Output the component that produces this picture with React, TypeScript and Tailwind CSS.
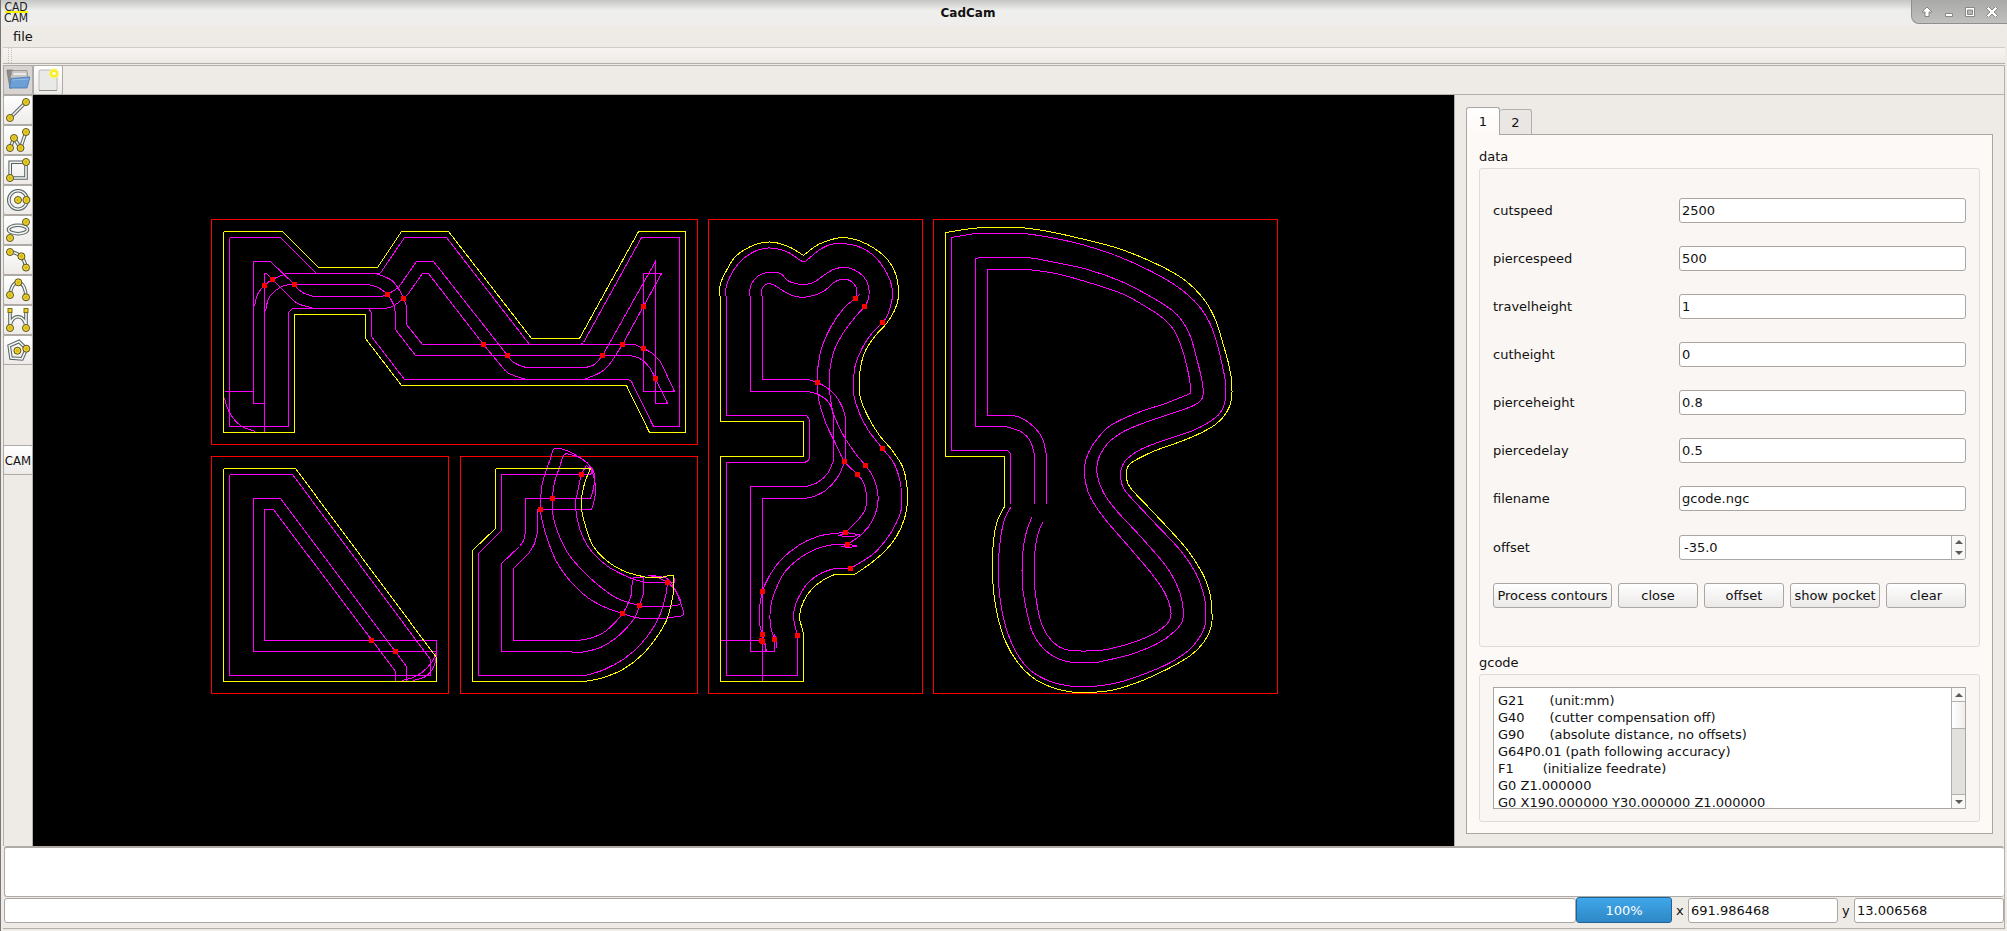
import type { ReactNode } from "react";

const tools = [
	{ name: "line", icon: <LineIcon /> },
	{ name: "polyline", icon: <PolylineIcon /> },
	{ name: "rectangle", icon: <RectangleIcon /> },
	{ name: "circle", icon: <CircleIcon /> },
	{ name: "ellipse", icon: <EllipseIcon /> },
	{ name: "arc", icon: <ArcIcon /> },
	{ name: "quadratic curve", icon: <QuadraticIcon /> },
	{ name: "cubic curve", icon: <CubicIcon /> },
	{ name: "polygon", icon: <PolygonIcon /> },
];

const fields = [
	{ name: "cutspeed", value: "2500" },
	{ name: "piercespeed", value: "500" },
	{ name: "travelheight", value: "1" },
	{ name: "cutheight", value: "0" },
	{ name: "pierceheight", value: "0.8" },
	{ name: "piercedelay", value: "0.5" },
	{ name: "filename", value: "gcode.ngc" },
];

const gcode = [
	"G21      (unit:mm)",
	"G40      (cutter compensation off)",
	"G90      (absolute distance, no offsets)",
	"G64P0.01 (path following accuracy)",
	"F1       (initialize feedrate)",
	"G0 Z1.000000",
	"G0 X190.000000 Y30.000000 Z1.000000",
].join("\n");

// x, y, width, height
const sheets = [
	[211, 219, 486, 225],
	[211, 456, 237, 237],
	[460, 456, 237, 237],
	[708, 219, 214, 474],
	[933, 219, 344, 474],
];

// Points in parentheses are joined by a smooth curve, all others by straight lines.
const contours = [
	"223,231 282,231 318,267 377,267 401,231 448,231 531,338 579,338 638,231 685,231 685,432 649,432 626,385 401,385 365,338 365,314 294,314 294,432 223,432 223,231",
	"223,468 295,468 436,657 436,681 223,681 223,468",
	"495,468 590,468 (589,470 584,483 581,498 581,509 586,529 593,546 606,560 622,570 642,576 652,577 660,577 668,575) 673,575 (673,592 670,607 666,620 658,634 643,653 624,668 603,677 584,681) 472,681 472,550 495,528 495,468",
	"720,421 (720,297 719,293 720,283 726,270 735,256 750,246 763,242 775,242 790,247 803,255) (803,255 816,245 831,239 843,237 858,240 874,248 887,259 895,273 898,288 898,297 894,310 886,323 875,335 865,350 860,367 859,384 860,398 868,417 879,435 891,449 902,466 906,482 907,500 904,518 896,536 885,550 870,563 854,574) (834,574 822,580 811,589 803,601 799,615 800,622 803,633) 803,681 720,681 720,456 803,456 803,421 720,421",
	"945,456 (945,232 971,228 987,227 1019,227 1048,231 1080,238 1118,248 1155,263 1182,278 1202,297 1214,317 1221,338 1228,363 1231,380 1231,399 1226,412 1215,424 1195,435 1172,444 1155,450 1140,457 1130,463 1126,470 1127,482 1133,491 1153,512 1185,547 1201,571 1209,591 1211,605 1211,625 1203,642 1190,655 1168,668 1142,680 1115,689 1090,692 1075,692 1055,688 1035,679 1018,663 1005,641 997,615 993,590 992,570 993,540 997,520 1004,506) 1004,456 945,456",
];

const toolpaths = [
	"229,237 280,237 316,273 379,273 381,271 404,237 446,237 529,344 580,344 583,342 641,237 679,237 679,426 653,426 631,381 628,379 404,379 371,336 371,312 368,308 292,308 288,312 288,426 229,426 229,237",
	"264,403 253,403 253,261 270,261 (294,284 298,289 304,293 313,296) (381,296 387,294 398,287) 416,261 433,261 (507,355 512,361 519,365 526,367) (585,367 594,364 602,355) 655,261 655,403 667,403 (655,378 649,367 641,359 634,356 626,355) 415,355 395,329 (395,313 393,304 387,294 381,289 375,286 367,284) (294,284 284,285 275,290 268,298 265,311)",
	"264,432 264,273 266,273 (289,296 297,303 310,307) 313,308 (383,308 392,306 403,298) 408,293 422,273 428,273 (483,344 498,362 507,372 522,378) 526,379",
	"583,379 (586,378 600,372 608,365 615,355 622,344) 661,273 643,273 643,391 674,391 (660,361 652,353 643,348 634,344) 422,344 406,324 (406,306 403,298 398,288 390,279 375,273) (286,273 272,279 264,285 257,294 254,306)",
	"224,391 253,391",
	"(224,398 229,412 240,425 255,431)",

	"229,474 292,474 430,659 430,675 229,675 229,474",
	"406,681 406,666 280,498 253,498 253,651 436,651 (436,655 433,667 425,676 413,680)",
	"395,681 395,671 273,509 264,509 264,640 436,640 (436,646 435,655 427,667 415,676 402,680)",

	"590,474 501,474 501,530 478,553 478,675 (585,675 604,669 624,658 640,644 653,627 660,613 665,596 667,582) 667,577",
	"590,474 592,470 (586,465 581,474 577,492 575,503 577,520 583,538 592,552 606,565 622,574 634,579 645,582) 674,582 674,578 672,575",
	"(590,498 593,488 594,475 591,467 581,458 573,455 564,454 559,467 554,482 552,498 552,512 557,531 567,552 580,568 597,584 615,597 628,602 639,605 645,606) (667,606 680,603 675,590 667,582 657,577 648,575)",
	"590,498 525,498 (525,531 523,540 519,546) 501,563 501,651 (567,651 577,652 585,651 600,647 616,637 630,623 636,614 639,605 643,593) 643,577",
	"(591,509 594,499 595,488 593,475 588,464 576,455 566,450 554,448 550,458 544,475 541,488 540,509 542,522 548,542 557,563 571,582 587,597 605,607 622,613 635,617 645,618) (664,618 676,616 683,614 680,602 675,590 668,579 659,576 649,575)",
	"591,509 537,509 (537,531 534,543 528,553) 513,568 513,640 (578,640 592,637 606,630 622,613 630,597 631,588 633,577) 643,577",

	"726,415 (726,298 725,290 729,277 738,263 750,253 763,248 775,248 788,252 800,260 803,261 806,260 818,250 830,244 843,243 858,246 872,254 883,267 890,281 892,292 891,302 887,315 882,322 872,332 862,347 855,364 853,380 853,393 859,413 868,430 882,448 893,462 899,478 901,492 901,508 895,524 885,540 872,554 850,568) (834,568 820,573 807,583 798,597 794,608 793,618 797,635) 797,675 726,675 726,462 804,462 808,460 809,457 809,419 806,415 726,415",
	"750,391 (750,298 749,290 753,280 760,274 769,272 780,273 787,280 795,283 803,284 813,282 823,275 833,269 843,267 853,269 863,276 868,286 868,298 864,306 856,315 843,332 833,352 829,373 829,390 833,413 843,435 855,453 865,465 872,475 877,490 877,505 872,520 862,533 847,544) (833,544 817,548 800,557 784,572 774,592 770,607 770,625 774,639) 774,651 750,651 750,486 (806,486 817,482 827,473 833,460) (833,415 829,403 820,395 808,391) 750,391",
	"762,379 (762,298 761,290 764,285 769,283 776,286 782,290 795,296 809,296 823,291 832,283 840,279 847,279 853,283 856,288 856,297) 859,294 (855,298 843,308 830,327 821,348 817,370 817,382 818,398 825,422 835,443 844,461 857,474 863,482 866,495 865,508 858,519 845,532) (833,533 817,536 798,545 780,560 768,577 762,591 759,607 759,623 762,634 766,651)",
	"762,379 (808,379 817,382 826,387 835,395 842,407 845,418) (845,452 844,461 837,477 825,490 813,496 803,498) 762,498 762,681",
	"720,640 762,640",
	"765,642 765,651",
	"774,634 776,642 776,647",
	"845,532 858,534 853,536 844,536 839,535 845,532",
	"847,544 856,545 856,546 847,547 842,546 847,544",

	"1010,503 1010,453 1007,450 951,450 (951,237 975,233 987,233 1021,233 1050,237 1085,245 1118,256 1151,271 1178,287 1198,305 1210,324 1217,345 1222,366 1225,382 1225,398 1220,412 1208,422 1190,431 1160,441 1140,449 1127,458 1122,465 1120,472 1121,482 1126,492 1150,518 1180,550 1195,572 1203,593 1205,605 1205,623 1199,637 1188,650 1168,663 1145,673 1118,682 1092,686 1073,686 1050,681 1030,670 1017,654 1007,632 1001,608 998,582 998,560 1000,538 1004,519 1010,507)",
	"1034,503 (1034,455 1030,441 1022,432 1012,428 1005,426) 975,426 975,258 (980,257 1025,257 1055,262 1087,269 1121,281 1150,296 1172,310 1182,321 1190,336 1197,361 1202,383 1202,397 1195,404 1180,410 1150,420 1125,430 1110,440 1102,450 1097,462 1097,476 1103,492 1115,509 1140,536 1165,565 1177,586 1182,603 1182,620 1174,631 1157,643 1130,654 1105,660 1094,662 1072,662 1055,657 1042,647 1032,632 1026,610 1022,585 1022,555 1025,535 1031,517)",
	"1046,503 (1046,455 1042,438 1034,427 1022,418 1012,415) 987,415 987,269 (1027,269 1055,273 1085,281 1121,293 1145,306 1163,318 1173,329 1180,344 1186,364 1190,385 1190,393) (1165,403 1135,413 1110,425 1097,438 1088,452 1084,466 1085,482 1090,497 1104,518 1129,547 1151,573 1163,590 1170,608 1169,620 1157,631 1138,640 1115,647 1098,650 1070,650 1058,646 1047,635 1040,620 1036,601 1034,583 1034,555 1037,535 1042,522)",
];

const nodes = [
	[264, 285], [272, 279], [294, 284], [387, 294], [403, 298], [483, 344],
	[507, 355], [602, 355], [622, 344], [643, 306], [643, 348], [655, 378],
	[371, 640], [395, 651],
	[581, 474], [552, 498], [540, 509], [667, 582], [639, 605], [622, 613],
	[855, 298], [864, 306], [882, 322], [817, 382], [882, 448], [844, 461],
	[865, 465], [857, 474], [845, 532], [847, 544], [850, 568], [762, 591],
	[762, 634], [761, 640], [762, 641], [774, 639], [797, 635],
];

function toPath(spec: string) {
	let d = "";
	for (const part of spec.match(/\([^)]*\)|[^\s()]+/g) ?? []) {
		const pts = part
			.replace(/[()]/g, "")
			.split(" ")
			.map((p) => p.split(",").map(Number));
		d += `${d ? "L" : "M"}${pts[0][0]} ${pts[0][1]}`;
		for (let i = 0; i < pts.length - 1; i++) {
			const b = pts[i];
			const c = pts[i + 1];
			// long spans are straight runs between two bends
			if (Math.hypot(c[0] - b[0], c[1] - b[1]) > 50) {
				d += `L${c[0]} ${c[1]}`;
				continue;
			}
			const a = pts[i - 1] ?? b;
			const e = pts[i + 2] ?? c;
			const ka = Math.hypot(b[0] - a[0], b[1] - a[1]) > 50 ? 16 : 6;
			const ke = Math.hypot(e[0] - c[0], e[1] - c[1]) > 50 ? 16 : 6;
			d += `C${b[0] + (c[0] - a[0]) / ka} ${b[1] + (c[1] - a[1]) / ka} ${c[0] - (e[0] - b[0]) / ke} ${c[1] - (e[1] - b[1]) / ke} ${c[0]} ${c[1]}`;
		}
	}
	return d;
}

function Drawing() {
	return (
		<svg
			viewBox="33 95 1421 751"
			className="min-w-0 flex-1 bg-black"
			fill="none"
			shapeRendering="crispEdges"
			role="img"
			aria-label="drawing"
		>
			<g transform="translate(0.5 0.5)">
				{sheets.map(([x, y, w, h]) => (
					<rect key={`${x}-${y}`} x={x} y={y} width={w} height={h} stroke="#f00" />
				))}
				{toolpaths.map((p) => (
					<path key={p} d={toPath(p)} stroke="#f0f" />
				))}
				{contours.map((p) => (
					<path key={p} d={toPath(p)} stroke="#ff0" />
				))}
				{nodes.map(([x, y]) => (
					<rect key={`${x}-${y}`} x={x - 2.5} y={y - 2.5} width={5} height={5} fill="#f00" />
				))}
			</g>
		</svg>
	);
}

function ToolIcon({ outline, dots, squares = [] }: { outline: string; dots: number[][]; squares?: number[][] }) {
	return (
		<svg viewBox="0 0 28 28" className="size-7" fill="none" aria-hidden="true">
			<path d={outline} stroke="#566360" strokeWidth={3.6} />
			<path d={outline} stroke="#f2f4f3" strokeWidth={1.6} />
			{squares.map(([x, y]) => (
				<rect key={x} x={x - 2} y={y - 2} width={4} height={4} fill="#edd21c" stroke="#7d6c16" />
			))}
			{dots.map(([x, y]) => (
				<g key={`${x}-${y}`}>
					<circle cx={x} cy={y} r={3.5} fill="#e5c91d" stroke="#5b5226" />
					<circle cx={x} cy={y} r={2.2} fill="#d6b916" stroke="#f3de3f" strokeWidth={0.8} />
				</g>
			))}
		</svg>
	);
}

function LineIcon() {
	return <ToolIcon outline="M6 22L22 6" dots={[[22, 6], [6, 22]]} />;
}

function PolylineIcon() {
	return <ToolIcon outline="M6 22L10 12L16.5 22L22 6" dots={[[22, 6], [10, 12], [6, 22], [16.5, 22]]} />;
}

function RectangleIcon() {
	return <ToolIcon outline="M6.2 6.2H22V22H6.2Z" dots={[[22, 6], [6, 22]]} />;
}

function CircleIcon() {
	return <ToolIcon outline="M4.8 14a9.2 9.2 0 1 0 18.4 0a9.2 9.2 0 1 0-18.4 0" dots={[[14, 14], [22.4, 14]]} />;
}

function EllipseIcon() {
	return <ToolIcon outline="M4.5 13.5a9.5 4.2 0 1 0 19 0a9.5 4.2 0 1 0-19 0" dots={[[22, 6], [6, 22]]} />;
}

function ArcIcon() {
	return <ToolIcon outline="M6 6Q20 7 22 21.6" dots={[[6, 6], [17.4, 10.3], [22, 21.6]]} />;
}

function QuadraticIcon() {
	return <ToolIcon outline="M6 19C7 11 10 6.5 14.3 6.3C19 7 22 13 22 21.3" dots={[[14.3, 6.3], [6, 19], [22, 21.3]]} />;
}

function CubicIcon() {
	return (
		<ToolIcon
			outline="M6 5V22C6 7 22 7 22 22V5"
			dots={[[6, 22], [22, 22]]}
			squares={[[6, 4.5], [22, 4.5]]}
		/>
	);
}

function PolygonIcon() {
	return <ToolIcon outline="M15 5.5L22.5 13L18 22.8L7 22L5.2 9.8Z" dots={[[13.4, 14.7], [22.3, 12.7]]} />;
}

function FolderIcon() {
	return (
		<svg viewBox="0 0 28 28" className="size-7" aria-hidden="true">
			<path d="M3 4h6l1 2v15l-4 1.500L3 6z" fill="#8c8c8a" stroke="#77736f" strokeWidth={0.6} />
			<path d="M8 4.500h15l1 9H6z" fill="#c9c7c5" stroke="#8b8784" strokeWidth={0.7} />
			<path d="M9.500 8h12.500" stroke="#f5f5f5" strokeWidth={1.5} />
			<path d="M7 12.500l19-1.500-3 11H5.500z" fill="#6b9fd6" stroke="#4376ae" strokeWidth={0.8} />
			<path d="M8 14l16.500-1" stroke="#94bde6" />
		</svg>
	);
}

function NewIcon() {
	return (
		<svg viewBox="0 0 28 28" className="size-7" aria-hidden="true">
			<rect x={5} y={4} width={18} height={20.5} rx={1} fill="#e9e9e8" stroke="#b9b9b7" />
			<path d="M5 24.500h18" stroke="#8f8f8d" />
			<circle cx={20} cy={7.5} r={5} fill="#fbf46a" />
			<circle cx={20} cy={7.5} r={3.6} fill="#f8ec20" />
			<circle cx={20} cy={7.5} r={1.8} fill="#fffde0" />
		</svg>
	);
}

function ToolButton({ label, active = false, children }: { label: string; active?: boolean; children: ReactNode }) {
	return (
		<button
			type="button"
			aria-label={label}
			className={`flex size-[30px] shrink-0 items-center justify-center rounded-xs border border-[#aeaaa6] ${
				active ? "bg-[#d8d4d1]" : "bg-linear-to-b from-white to-[#eeebe9]"
			}`}
		>
			{children}
		</button>
	);
}

function PushButton({ className, children }: { className: string; children: ReactNode }) {
	return (
		<button
			type="button"
			className={`h-[25px] rounded-[3px] border border-[#aaa6a3] bg-linear-to-b from-white to-[#ebe9e8] whitespace-nowrap ${className}`}
		>
			{children}
		</button>
	);
}

function Arrow({ down = false }: { down?: boolean }) {
	return (
		<svg viewBox="0 0 8 4" className="h-1 w-2" fill="#5c5a58" aria-hidden="true">
			<path d={down ? "M0 0h8L4 4z" : "M0 4h8L4 0z"} />
		</svg>
	);
}

function Logo() {
	return (
		<svg
			viewBox="0 0 28 26"
			className="h-[26px] w-7"
			fontFamily='"Liberation Sans Narrow", "DejaVu Sans Condensed", sans-serif'
			fontSize={12}
			textAnchor="middle"
			fill="#222"
			role="img"
			aria-label="CadCam logo"
		>
			<path d="M4 12h23" stroke="#f8f400" strokeWidth={2} />
			<text x={15} y={11}>
				CAD
			</text>
			<text x={15} y={22}>
				CAM
			</text>
		</svg>
	);
}

function TitleBar() {
	return (
		<header className="-ml-0.5 flex h-[26px] items-start bg-linear-to-b from-[#c6c6c4] via-[#eeeeec] via-40% to-[#efeeec]">
			<Logo />
			<h1 className="flex-1 pr-1 text-center text-xs leading-[26px] font-bold">CadCam</h1>
			<div className="-mr-0.5 flex h-6 w-24 items-center justify-around rounded-bl-lg border-b border-l border-[#8f8f8d] bg-linear-to-b from-[#a9a9a7] to-[#c0c0be] px-1">
				<WindowButton label="shade">
					<path d="M7 2L2 7h3v4.500h4V7h3z" />
				</WindowButton>
				<WindowButton label="minimize">
					<path d="M3.500 8.500h7v3h-7z" />
				</WindowButton>
				<WindowButton label="maximize">
					<path d="M2.500 2.500v9h9v-9zM4.500 5h5v4.500h-5z" fillRule="evenodd" />
				</WindowButton>
				<WindowButton label="close window">
					<path d="M3.500 1.500L7 5l3.500-3.500 2 2L9 7l3.500 3.500-2 2L7 9l-3.500 3.500-2-2L5 7 1.500 3.500z" />
				</WindowButton>
			</div>
		</header>
	);
}

function WindowButton({ label, children }: { label: string; children: ReactNode }) {
	return (
		<button type="button" aria-label={label}>
			<svg viewBox="0 0 14 14" className="size-3.5" fill="#fff" stroke="#7f7f7d" strokeWidth={0.9} aria-hidden="true">
				{children}
			</svg>
		</button>
	);
}

function SidePanel() {
	return (
		<aside className="flex w-[550px] shrink-0 flex-col border-l border-[#b3afab] py-3 pr-[11px] pl-[11px]">
			<div role="tablist" className="flex items-end pr-px">
				<button
					type="button"
					role="tab"
					aria-selected="true"
					className="z-10 -mb-px h-7 w-[34px] rounded-t-[3px] border border-b-0 border-[#aaa6a3] bg-linear-to-b from-white to-[#fdf9f6]"
				>
					1
				</button>
				<button
					type="button"
					role="tab"
					aria-selected="false"
					className="h-[25px] w-8 rounded-t-[3px] border border-b-0 border-l-0 border-[#b3afab] bg-[#e9e6e4]"
				>
					2
				</button>
			</div>
			<div role="tabpanel" className="flex flex-1 flex-col border border-[#aaa6a3] bg-[#fdf9f6] px-3 pt-[13px] pb-[11px]">
				<h2 className="mb-[3px]">data</h2>
				<div className="flex flex-1 flex-col gap-[23px] rounded-[3px] border border-[#dfdbd8] bg-[#f9f6f3] px-[13px] pt-[29px] pb-9">
					{fields.map(({ name, value }) => (
						<div key={name} className="flex items-center">
							<label htmlFor={name} className="w-[186px]">
								{name}
							</label>
							<input
								id={name}
								defaultValue={value}
								className="h-[25px] min-w-0 flex-1 rounded-[3px] border border-[#aaa6a3] bg-white px-0.5"
							/>
						</div>
					))}
					<div className="flex items-center pt-px">
						<label htmlFor="offset" className="w-[186px]">
							offset
						</label>
						<div className="flex h-[25px] min-w-0 flex-1 overflow-hidden rounded-[3px] border border-[#aaa6a3] bg-white">
							<input id="offset" inputMode="decimal" defaultValue="-35.0" className="min-w-0 flex-1 pl-1" />
							<div className="flex w-3.5 flex-col border-l border-[#b3afab] bg-[#f9f8f7]">
								<button type="button" aria-label="increase offset" className="flex flex-1 items-center justify-center">
									<Arrow />
								</button>
								<button type="button" aria-label="decrease offset" className="flex flex-1 items-center justify-center">
									<Arrow down />
								</button>
							</div>
						</div>
					</div>
					<div className="flex gap-1.5">
						<PushButton className="w-[119px]">Process contours</PushButton>
						<PushButton className="flex-1">close</PushButton>
						<PushButton className="flex-1">offset</PushButton>
						<PushButton className="w-[90px]">show pocket</PushButton>
						<PushButton className="flex-1">clear</PushButton>
					</div>
				</div>
				<label htmlFor="gcode" className="mt-[7px] mb-[3px]">
					gcode
				</label>
				<div className="rounded-[3px] border border-[#dfdbd8] bg-[#f9f6f3] px-[13px] py-3">
					<div className="flex h-[122px] border border-[#aaa6a3] bg-white">
						<textarea
							id="gcode"
							defaultValue={gcode}
							className="min-w-0 flex-1 resize-none overflow-hidden px-1 pt-1 whitespace-pre"
						/>
						<div className="flex w-3.5 flex-col border-l border-[#b3afab] bg-[#e3e1de]">
							<button
								type="button"
								aria-label="scroll up"
								className="flex h-3.5 items-center justify-center border-b border-[#b3afab] bg-[#f9f8f7]"
							>
								<Arrow />
							</button>
							<div className="h-[27px] border-b border-[#b3afab] bg-linear-to-r from-white to-[#f0eeed]" />
							<button
								type="button"
								aria-label="scroll down"
								className="mt-auto flex h-3.5 items-center justify-center border-t border-[#b3afab] bg-[#f9f8f7]"
							>
								<Arrow down />
							</button>
						</div>
					</div>
				</div>
			</div>
		</aside>
	);
}

export default function App() {
	return (
		<div
			className="flex min-h-screen flex-col border-l border-[#777] bg-[#eeebe7] pr-0.5 pl-0.5 text-[13px] leading-[17px] text-[#111]"
			style={{ fontFamily: '"DejaVu Sans", sans-serif' }}
		>
			<TitleBar />
			<nav className="flex h-[22px] items-center border-b border-[#cfcbc6] pl-2.5">
				<button type="button">file</button>
			</nav>
			<div className="flex h-4 items-center border-b border-[#b3afab] bg-linear-to-b from-[#f7f4f1] to-[#edeae6] pl-[5px]">
				<div className="h-full w-1 border-x border-dotted border-[#c4c0bc]" />
			</div>
			<div className="mt-px flex h-[30px] border-t border-r border-b border-[#b3afab]">
				<div className="-my-px flex">
					<ToolButton label="open" active>
						<FolderIcon />
					</ToolButton>
					<ToolButton label="new">
						<NewIcon />
					</ToolButton>
				</div>
			</div>

			<main className="flex flex-1 border-r border-[#b3afab]">
				<div className="flex w-[30px] shrink-0 flex-col border-x border-[#b3afab]">
					<div className="-mx-px flex flex-col">
						{tools.map(({ name, icon }) => (
							<ToolButton key={name} label={name}>
								{icon}
							</ToolButton>
						))}
					</div>
					<div className="-mx-px mt-20">
						<ToolButton label="CAM">
							<span
								className="text-[13px]"
								style={{ fontFamily: '"Liberation Sans Narrow", "DejaVu Sans Condensed", sans-serif' }}
							>
								CAM
							</span>
						</ToolButton>
					</div>
				</div>
				<Drawing />
				<SidePanel />
			</main>

			<footer className="border-r border-b border-[#b3afab] pb-[5px] pl-px">
				<textarea
					aria-label="output"
					className="block h-[51px] w-full resize-none rounded-[3px] border-t-2 border-b border-l border-[#aeaaa6] bg-white"
				/>
				<div className="flex items-center">
					<input
						aria-label="command"
						className="h-[25px] min-w-0 flex-1 rounded-[3px] border border-[#aaa6a3] bg-white px-0.5"
					/>
					<div
						role="progressbar"
						aria-valuenow={100}
						className="flex h-[26px] w-24 items-center justify-center rounded-[3px] border border-[#1f6397] bg-linear-to-b from-[#3fa7ea] to-[#2f88c6] text-white"
					>
						100%
					</div>
					<label htmlFor="pos-x" className="w-4 pl-1">
						x
					</label>
					<input
						id="pos-x"
						defaultValue="691.986468"
						className="h-[25px] w-[150px] rounded-[3px] border border-[#aaa6a3] bg-white px-0.5"
					/>
					<label htmlFor="pos-y" className="w-4 pl-1">
						y
					</label>
					<input
						id="pos-y"
						defaultValue="13.006568"
						className="h-[25px] w-[150px] rounded-[3px] border border-[#aaa6a3] bg-white px-0.5"
					/>
				</div>
			</footer>
			<div className="h-0.5" />
		</div>
	);
}
